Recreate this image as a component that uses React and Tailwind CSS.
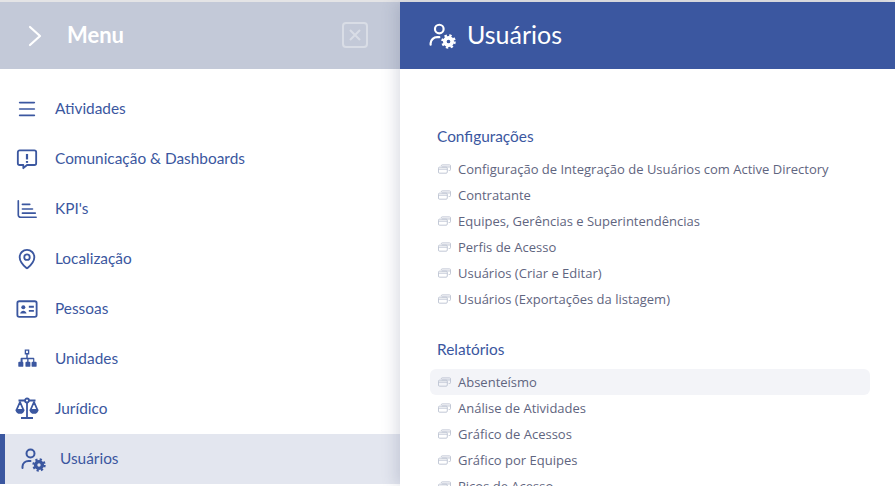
import React from 'react';
import { Menu, MapPin } from 'lucide-react';

const UsersGear = ({ className }) => (
  <svg viewBox="0 0 24 24" className={`overflow-visible ${className}`} fill="none" stroke="currentColor" strokeWidth="2" strokeLinecap="round">
    <circle cx="9.500" cy="6.500" r="4" />
    <path d="M1.500 21v-1.500a6 6 0 0 1 6-5.500h2" />
    <g strokeLinecap="butt">
      <circle cx="18" cy="18" r="3.400" strokeWidth="3.400" />
      <circle cx="18" cy="18" r="5.600" strokeWidth="2.200" strokeDasharray="2.200 2.200" />
    </g>
  </svg>
);

const ChatAlert = ({ className }) => (
  <svg viewBox="0 0 24 24" className={className} fill="none" stroke="currentColor" strokeWidth="2" strokeLinejoin="round">
    <path d="M4 2.500h16a2 2 0 0 1 2 2v12a2 2 0 0 1-2 2h-8l-4 3.500v-3.500H4a2 2 0 0 1-2-2v-12a2 2 0 0 1 2-2z" />
    <path d="M12 6.500v6" strokeWidth="2.400" />
    <path d="M12 14.200v2" strokeWidth="2.400" />
  </svg>
);

const Kpi = ({ className }) => (
  <svg viewBox="0 0 24 24" className={className} fill="none" stroke="currentColor" strokeWidth="1.800" strokeLinecap="round">
    <path d="M2.500 3v15.500a2.500 2.500 0 0 0 2.500 2.500h17" />
    <path d="M7 7h8M7 12h11M7 16.500h14" />
  </svg>
);

const IdCard = ({ className }) => (
  <svg viewBox="0 0 24 24" className={className} fill="none" stroke="currentColor" strokeWidth="2">
    <rect x="1.500" y="3.500" width="21" height="17" rx="2" />
    <circle cx="8" cy="10" r="2.200" fill="currentColor" stroke="none" />
    <path d="M4.500 17c.5-2.300 2-3.200 3.500-3.200s3 .9 3.500 3.200z" fill="currentColor" stroke="none" />
    <path d="M14 9.500h5.500M14 14h5.500" strokeWidth="2" />
  </svg>
);

const Sitemap = ({ className }) => (
  <svg viewBox="0 0 24 24" className={className} fill="currentColor">
    <path fillRule="evenodd" d="M9.500 1.500h5v5.500h-1.700v3.600H19a1 1 0 0 1 1 1v3.400h1.500a1 1 0 0 1 1 1v3.500a1 1 0 0 1-1 1h-3.500a1 1 0 0 1-1-1V16a1 1 0 0 1 1-1h.7v-2.800h-5V15h1a1 1 0 0 1 1 1v3.500a1 1 0 0 1-1 1h-3.400a1 1 0 0 1-1-1V16a1 1 0 0 1 1-1h.900v-2.800h-5V15H7a1 1 0 0 1 1 1v3.500a1 1 0 0 1-1 1H3.500a1 1 0 0 1-1-1V16a1 1 0 0 1 1-1H5v-3.400a1 1 0 0 1 1-1h5.200V7H9.500zM11 3v2.500h2V3z" />
  </svg>
);

const Scale = ({ className }) => (
  <svg viewBox="0 0 24 24" className={className} fill="none" stroke="currentColor" strokeWidth="1.800" strokeLinejoin="round">
    <path d="M3.500 3.500h6.500M14 3.500h6.500M12 6v14.500M6 21h12" />
    <circle cx="12" cy="3.500" r="2" />
    <path d="M5 5l-3.500 8h7z" />
    <path d="M19 5l-3.500 8h7z" />
    <path d="M.5 12.800h9a4.500 4 0 0 1-9 0zM14.500 12.800h9a4.500 4 0 0 1-9 0z" fill="currentColor" stroke="none" />
  </svg>
);

const Chevron = () => (
  <svg viewBox="0 0 14 22" className="w-[14px] h-[22px]" fill="none" stroke="currentColor" strokeWidth="2.200" strokeLinecap="round" strokeLinejoin="round">
    <path d="M2 2l10 9-10 9" />
  </svg>
);

const CloseBox = () => (
  <svg viewBox="0 0 26 26" className="w-[26px] h-[26px] text-[#d9dde6]" fill="none" stroke="currentColor">
    <rect x="1" y="1" width="24" height="24" rx="3" strokeWidth="2" />
    <path d="M8 8l10 10M18 8L8 18" strokeWidth="2" />
  </svg>
);

const Windows = () => (
  <svg viewBox="0 0 14 10" className="w-[13px] h-[10px] text-[#bcc2d2] shrink-0" fill="none" stroke="currentColor" strokeWidth="1">
    <rect x="0.500" y="3" width="9.500" height="6.500" rx="1.200" />
    <path d="M0.500 5.200h9.500" />
    <path d="M3.500 1.800v-.2a1 1 0 0 1 1-1h8a1 1 0 0 1 1 1v4a1 1 0 0 1-1 1h-1" />
    <path d="M4 2.800h9" />
  </svg>
);

const menuItems = [
  { label: 'Atividades', icon: <Menu className="w-[22px] h-[22px]" strokeWidth={1.800} /> },
  { label: 'Comunicação & Dashboards', icon: <ChatAlert className="w-[22px] h-[22px]" /> },
  { label: "KPI's", icon: <Kpi className="w-[22px] h-[22px]" /> },
  { label: 'Localização', icon: <MapPin className="w-[22px] h-[22px]" strokeWidth={2} /> },
  { label: 'Pessoas', icon: <IdCard className="w-[22px] h-[22px]" /> },
  { label: 'Unidades', icon: <Sitemap className="w-[22px] h-[22px]" /> },
  { label: 'Jurídico', icon: <Scale className="w-[24px] h-[24px] -ml-px" /> },
];

const config = [
  'Configuração de Integração de Usuários com Active Directory',
  'Contratante',
  'Equipes, Gerências e Superintendências',
  'Perfis de Acesso',
  'Usuários (Criar e Editar)',
  'Usuários (Exportações da listagem)',
];

const reports = ['Absenteísmo', 'Análise de Atividades', 'Gráfico de Acessos', 'Gráfico por Equipes', 'Picos de Acesso'];

const LinkRow = ({ label, active }) => (
  <div className={`h-[26px] flex items-center gap-[7px] pl-[8px] rounded-md ${active ? 'bg-[#f3f4f8]' : ''}`}>
    <Windows />
    <span className="text-[13px] pt-px text-[#5f6580] font-['Open_Sans',sans-serif] whitespace-nowrap">{label}</span>
  </div>
);

export default function App() {
  return (
    <div className="w-[895px] h-[486px] overflow-hidden flex flex-col bg-white font-['Lato',sans-serif]">
      <div className="h-[2px] bg-[#e4e4e6] shrink-0" />
      <div className="flex flex-1 min-h-0">
        <aside className="w-[400px] shrink-0">
          <div className="h-[67px] bg-[#c3c9d8] flex items-center pl-[28px] pr-[32px] text-white">
            <Chevron />
            <span className="ml-[25px] text-[22px] font-bold leading-none -mt-[2px]">Menu</span>
            <div className="ml-auto -mt-[2px]">
              <CloseBox />
            </div>
          </div>
          <nav className="pt-[15px]">
            {menuItems.map((item) => (
              <div key={item.label} className="h-[50px] flex items-center text-[#3b57a0]">
                <div className="w-[55px] pl-[16px] shrink-0 flex">{item.icon}</div>
                <span className="text-[15.4px] whitespace-nowrap">{item.label}</span>
              </div>
            ))}
            <div className="h-[50px] flex items-center text-[#3b57a0] bg-[#e3e6ef] border-l-[5px] border-[#3b57a0]">
              <div className="w-[55px] pl-[16px] shrink-0 flex">
                <UsersGear className="w-[24px] h-[24px]" />
              </div>
              <span className="text-[15.4px]">Usuários</span>
            </div>
          </nav>
        </aside>
        <main className="flex-1 min-w-0 shadow-[-4px_0_14px_rgba(60,70,110,0.18)] z-10 bg-white">
          <div className="h-[67px] bg-[#3b57a0] flex items-center pl-[29px] text-white">
            <UsersGear className="w-[26px] h-[26px] -mt-[2px]" />
            <span className="ml-[12px] text-[25px] leading-none -mt-[2px]">Usuários</span>
          </div>
          <div className="pl-[30px] pr-[25px] pt-[54px]">
            <h2 className="pl-[7px] text-[15.4px] text-[#3b57a0] leading-[26px]">Configurações</h2>
            <div className="mt-[7px]">
              {config.map((label) => (
                <LinkRow key={label} label={label} />
              ))}
            </div>
            <h2 className="pl-[7px] mt-[24px] text-[15.4px] text-[#3b57a0] leading-[26px]">Relatórios</h2>
            <div className="mt-[7px]">
              {reports.map((label, i) => (
                <LinkRow key={label} label={label} active={i === 0} />
              ))}
            </div>
          </div>
        </main>
      </div>
    </div>
  );
}
